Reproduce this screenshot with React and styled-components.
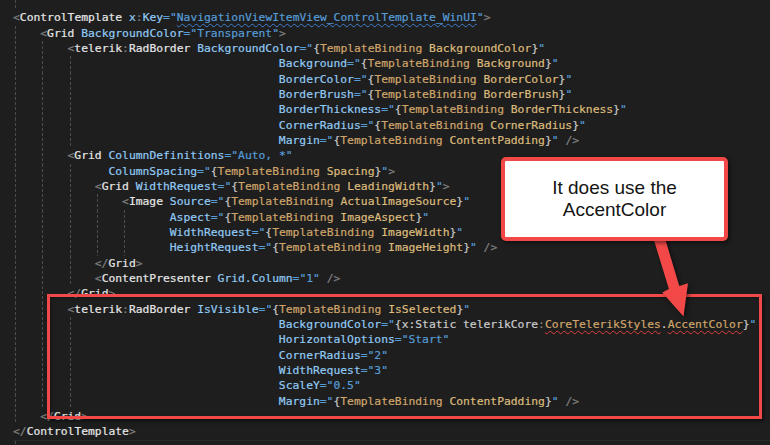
import React from "react";
import styled, { createGlobalStyle } from "styled-components";

const GlobalStyle = createGlobalStyle`
  html, body {
    margin: 0;
    padding: 0;
    background: #1e1e1e;
  }
`;

const RED = "#f24848";

const COLORS = {
  punct: "#808080",
  el: "#e6e6e6",
  attr: "#92caf4",
  quote: "#569cd6",
  value: "#569cd6",
  brace: "#c8c8c8",
  ext: "#cfa56b",
  param: "#dcbb7c",
  plain: "#cccccc",
};

const SQUIGGLE = {
  info: "#3f7fd0",
  error: "#e04040",
};

// indent = leading columns, guides = indent levels that show a dashed guide
const LINES = [
  [0, [], `<ControlTemplate x:Key="NavigationViewItemView_ControlTemplate_WinUI">`],
  [4, [0], `<Grid BackgroundColor="Transparent">`],
  [8, [0, 1], `<telerik:RadBorder BackgroundColor="{TemplateBinding BackgroundColor}"`],
  [39, [0, 1, 2], `Background="{TemplateBinding Background}"`],
  [39, [0, 1, 2], `BorderColor="{TemplateBinding BorderColor}"`],
  [39, [0, 1, 2], `BorderBrush="{TemplateBinding BorderBrush}"`],
  [39, [0, 1, 2], `BorderThickness="{TemplateBinding BorderThickness}"`],
  [39, [0, 1, 2], `CornerRadius="{TemplateBinding CornerRadius}"`],
  [39, [0, 1, 2], `Margin="{TemplateBinding ContentPadding}" />`],
  [8, [0, 1], `<Grid ColumnDefinitions="Auto, *"`],
  [14, [0, 1, 2], `ColumnSpacing="{TemplateBinding Spacing}">`],
  [12, [0, 1, 2], `<Grid WidthRequest="{TemplateBinding LeadingWidth}">`],
  [16, [0, 1, 2, 3], `<Image Source="{TemplateBinding ActualImageSource}"`],
  [23, [0, 1, 2, 3, 4], `Aspect="{TemplateBinding ImageAspect}"`],
  [23, [0, 1, 2, 3, 4], `WidthRequest="{TemplateBinding ImageWidth}"`],
  [23, [0, 1, 2, 3, 4], `HeightRequest="{TemplateBinding ImageHeight}" />`],
  [12, [0, 1, 2], `</Grid>`],
  [12, [0, 1, 2], `<ContentPresenter Grid.Column="1" />`],
  [8, [0, 1], `</Grid>`],
  [8, [0, 1], `<telerik:RadBorder IsVisible="{TemplateBinding IsSelected}"`],
  [39, [0, 1, 2], `BackgroundColor="{x:Static telerikCore:CoreTelerikStyles.AccentColor}"`],
  [39, [0, 1, 2], `HorizontalOptions="Start"`],
  [39, [0, 1, 2], `CornerRadius="2"`],
  [39, [0, 1, 2], `WidthRequest="3"`],
  [39, [0, 1, 2], `ScaleY="0.5"`],
  [39, [0, 1, 2], `Margin="{TemplateBinding ContentPadding}" />`],
  [4, [0], `</Grid>`],
  [0, [], `</ControlTemplate>`],
];

function splitColon(word, kind, out) {
  word.split(/(:)/).forEach((p) => p && out.push(p === ":" ? ["punct", ":"] : [kind, p]));
}

function tokenize(src) {
  const out = [];
  let i = 0;
  while (i < src.length) {
    const rest = src.slice(i);
    let m;
    if ((m = rest.match(/^(<\/?)([\w:.]+)/))) {
      out.push(["punct", m[1]]);
      splitColon(m[2], "el", out);
    } else if ((m = rest.match(/^\/?>/))) {
      out.push(["punct", m[0]]);
    } else if ((m = rest.match(/^([\w:.]+)(?==)/))) {
      splitColon(m[1], "attr", out);
    } else if ((m = rest.match(/^=/))) {
      out.push(["quote", "="]);
    } else if ((m = rest.match(/^"\{([\w:]+) ([^}]*)\}"/))) {
      out.push(["quote", '"'], ["brace", "{"]);
      if (m[1].includes(":")) {
        // x:Static reference
        out.push(["plain", m[1]], ["plain", " "]);
        const [ns, member] = m[2].split(":");
        out.push(["plain", ns], ["punct", ":"]);
        member.split(/(\.)/).forEach((p) =>
          out.push(p === "." ? ["plain", "."] : ["ext", p, "error"])
        );
      } else {
        out.push(["ext", m[1]], ["plain", " "], ["param", m[2]]);
      }
      out.push(["brace", "}"], ["quote", '"']);
    } else if ((m = rest.match(/^"([^"]*)"/))) {
      out.push(["quote", '"'], ["value", m[1], m[1].includes("_") ? "info" : null], ["quote", '"']);
    } else {
      m = rest.match(/^\s+|^./);
      out.push(["plain", m[0]]);
    }
    i += m[0].length;
  }
  return out;
}

const App = () => {
  return (
    <>
      <GlobalStyle />
      <Page>
        <Editor>
          <EdgeRow>
            <Guide $on />
          </EdgeRow>
          {LINES.map(([indent, guides, src], n) => {
            const cells = Math.floor(indent / 4);
            return (
              <Row key={n}>
                {Array.from({ length: cells }, (_, l) => (
                  <Guide key={l} $on={guides.includes(l)} />
                ))}
                <Token $kind="plain">{" ".repeat(indent % 4)}</Token>
                {tokenize(src).map(([kind, text, squiggle], k) => (
                  <Token key={k} $kind={kind} $squiggle={squiggle}>
                    {text}
                  </Token>
                ))}
              </Row>
            );
          })}
          <BottomRow>
            <Guide $on />
          </BottomRow>
        </Editor>

        <Highlight />

        <Arrow width="60" height="95" viewBox="640 230 60 95">
          <polygon
            points="664.3,236 653.7,239.3 668.9,289 662.3,292.5 683.5,316.5 688,283.3 679.3,286"
            fill={RED}
          />
        </Arrow>

        <Callout>
          It does use the
          <br />
          AccentColor
        </Callout>
      </Page>
    </>
  );
};

const Page = styled.div`
  position: relative;
  width: 770px;
  height: 445px;
  overflow: hidden;
  background: #1e1e1e;
`;

const Editor = styled.div`
  padding-left: 13px;
  font-family: "DejaVu Sans Mono", "Liberation Mono", monospace;
  font-size: 11.33px;
  line-height: 15.33px;
  -webkit-text-stroke: 0.2px currentColor;
`;

const Row = styled.div`
  height: 15.33px;
  white-space: pre;
  color: ${COLORS.plain};
`;

const EdgeRow = styled.div`
  height: 10.33px;
`;

const BottomRow = styled.div`
  height: 10px;
  border-top: 1px solid #2a2a2a;
`;

const Guide = styled.span`
  display: inline-block;
  vertical-align: top;
  width: 4ch;
  height: 100%;
  background: ${({ $on }) =>
    $on ? "linear-gradient(#4c4c4c 60%, transparent 60%) 2px 0 / 1px 5px repeat-y" : "none"};
`;

const Token = styled.span`
  color: ${({ $kind }) => COLORS[$kind]};
  text-decoration: ${({ $squiggle }) =>
    $squiggle ? `underline wavy ${SQUIGGLE[$squiggle]} 1px` : "none"};
  text-underline-offset: 2px;
`;

const Highlight = styled.div`
  position: absolute;
  left: 47px;
  top: 294px;
  width: 709px;
  height: 119px;
  border: 3px solid ${RED};
  box-shadow: 2px 2px 4px rgba(0, 0, 0, 0.55), inset 1px 1px 3px rgba(0, 0, 0, 0.35);
`;

const Arrow = styled.svg`
  position: absolute;
  left: 640px;
  top: 230px;
  overflow: visible;
  filter: drop-shadow(2px 2px 2px rgba(0, 0, 0, 0.5));
`;

const Callout = styled.div`
  position: absolute;
  left: 501px;
  top: 157px;
  width: 219px;
  height: 76px;
  display: flex;
  align-items: center;
  justify-content: center;
  text-align: center;
  background: #ffffff;
  border: 4px solid ${RED};
  border-radius: 5px;
  box-shadow: 2px 2px 4px rgba(0, 0, 0, 0.5);
  font-family: "Liberation Sans", Arial, sans-serif;
  font-size: 19px;
  line-height: 21.8px;
  color: #141414;
`;

export default App;
